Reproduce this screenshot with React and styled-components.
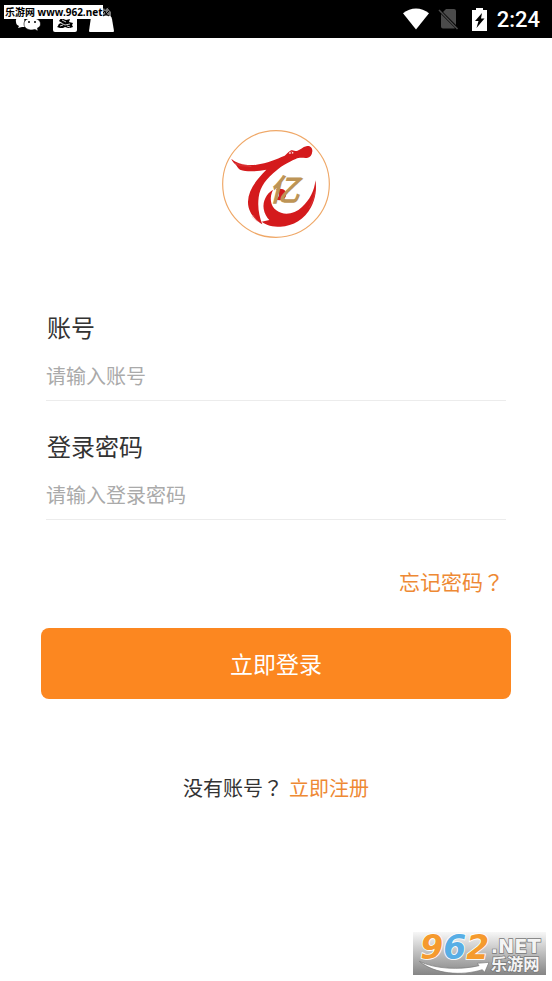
import React, { useState } from "react";
import styled, { createGlobalStyle, ThemeProvider } from "styled-components";

const theme = {
  primary: "#fc8720",
  link: "#ee8934",
  text: "#333333",
  placeholder: "#aaaaaa",
  line: "#ececec",
  font: {
    family: `"Noto Sans CJK SC", "Noto Sans", sans-serif`,
    centered: `"Noto Sans CJK TC", "Noto Sans", sans-serif`,
    status: `Roboto, "Noto Sans", sans-serif`,
    size: { s: "20px", m: "21px", l: "23px", xl: "24px" },
  },
};

const GlobalStyle = createGlobalStyle`
  * {
    box-sizing: border-box;
  }
  body {
    margin: 0;
    background: #ffffff;
    color: ${theme.text};
    font-family: ${theme.font.family};
  }
`;

const StyledPage = styled.div`
  position: relative;
  display: flex;
  flex-direction: column;
  min-height: 100vh;
`;

const StyledStatusBar = styled.header`
  display: flex;
  align-items: center;
  justify-content: space-between;
  height: 38px;
  padding: 0 12px 0 15px;
  background: #000000;
`;

const StyledNotifications = styled.div`
  display: flex;
  align-items: flex-end;
  gap: 12px;
  height: 28px;
`;

const StyledSystem = styled.div`
  display: flex;
  align-items: center;
`;

const StyledIcon = styled.svg`
  display: block;
  flex: none;
  width: ${({ $width }) => $width}px;
  height: ${({ $height }) => $height}px;
  margin-right: ${({ $gap }) => $gap || 0}px;
`;

const StyledTime = styled.span`
  padding-top: 2px;
  font-family: ${({ theme }) => theme.font.status};
  font-size: 22px;
  font-weight: 500;
  line-height: 36px;
  color: #ffffff;
`;

const StyledSiteTag = styled.span`
  position: absolute;
  top: 5px;
  left: 4px;
  padding: 0 1px;
  background: #ffffff;
  color: #000000;
  font-family: "Noto Sans", "Noto Sans CJK SC", sans-serif;
  font-size: 10px;
  font-weight: 700;
  line-height: 14px;
  white-space: nowrap;
`;

const StyledMain = styled.main`
  display: flex;
  flex-direction: column;
  padding: 86px 41px 0;
`;

const StyledLogo = styled.svg`
  display: block;
  align-self: center;
  width: 120px;
  height: 120px;
`;

const StyledForm = styled.form`
  display: flex;
  flex-direction: column;
  margin-top: 66px;
`;

const StyledField = styled.div`
  display: flex;
  flex-direction: column;
  height: 91px;
  margin: 0 5px 28px;
  border-bottom: 1px solid ${({ theme }) => theme.line};
`;

const StyledLabel = styled.label`
  padding-left: 1px;
  font-size: ${({ theme }) => theme.font.size.xl};
  line-height: 34px;
`;

const StyledInput = styled.input`
  width: 100%;
  height: 30px;
  margin-top: 16px;
  padding: 0;
  border: 0;
  outline: 0;
  background: transparent;
  color: ${({ theme }) => theme.text};
  font-family: inherit;
  font-size: ${({ theme }) => theme.font.size.s};
  &::placeholder {
    color: ${({ theme }) => theme.placeholder};
    opacity: 1;
  }
`;

const StyledLink = styled.a`
  color: ${({ theme }) => theme.link};
  text-decoration: none;
`;

const StyledMark = styled.span`
  font-family: ${({ theme }) => theme.font.centered};
`;

const StyledForgot = styled(StyledLink)`
  align-self: flex-end;
  margin: 17px 7px 31px 0;
  font-size: ${({ theme }) => theme.font.size.m};
  line-height: 32px;
`;

const StyledButton = styled.button`
  width: 100%;
  height: 71px;
  padding: 0 0 2px;
  border: 0;
  border-radius: 8px;
  background: ${({ theme }) => theme.primary};
  color: #ffffff;
  font-family: inherit;
  font-size: ${({ theme }) => theme.font.size.l};
  cursor: pointer;
`;

const StyledRegister = styled.p`
  display: flex;
  justify-content: center;
  gap: 6px;
  margin: 74px 0 60px;
  font-size: ${({ theme }) => theme.font.size.s};
  line-height: 30px;
`;

const StyledWatermark = styled.svg`
  position: absolute;
  right: 6px;
  bottom: 6px;
  width: 133px;
  height: 43px;
  overflow: visible;
`;

const ChatIcon = () => (
  <StyledIcon $width={26} $height={18} viewBox="0 0 26 18" aria-hidden="true">
    <path fill="#fff" d="M9 1C4 1 0 3 1 7c0 2 1 3 3 4l-1 2 4-1h3z" />
    <path
      fill="#fff"
      stroke="#000"
      strokeWidth=".6"
      d="M17 3c-4 0-8 2-8 6s4 6 8 6l3-.5 3 1.500-.5-3c2-1 3-2 3-4 0-4-4-6-8.500-6z"
    />
    <circle cx="14" cy="7" r="1" />
    <circle cx="20" cy="7" r="1" />
  </StyledIcon>
);

const PictureIcon = () => (
  <StyledIcon $width={24} $height={24} viewBox="0 0 24 24" aria-hidden="true">
    <rect width="24" height="23" rx="2" fill="#fff" />
    <path d="M5 17c0-2 2-3 4-3l-3-2 2-3 5 2 4-1-1 3 4 1-1 2 1 2-3 1-2 0-3-1-2 1-3 0-3-1z" />
    <path d="M8 14l4 2 5-1M7 17l3-1M14 17l3 1M9 11l4 2" stroke="#fff" strokeWidth=".8" fill="none" />
  </StyledIcon>
);

const BagIcon = () => (
  <StyledIcon $width={25} $height={27} viewBox="0 0 25 27" aria-hidden="true">
    <path d="M2 11q1-2 3-2h14q3 0 4 4l2 12q0 1-1 1H1q-1 0-1-1z" fill="#fff" />
    <path d="M13 10V4l2-2 1 2 3-3 1 3 2 2v4z" fill="#777" />
    <path d="M14 7l2-2 1 3 3-3M18 1l2 2M14 10l3-2 3 2" stroke="#000" fill="none" />
  </StyledIcon>
);

const WifiIcon = () => (
  <StyledIcon $width={26} $height={22} $gap={9} viewBox="0 0 27 22" aria-hidden="true">
    <path d="M0 5C8-1.500 19-1.500 27 5L13.500 22z" fill="#fff" />
  </StyledIcon>
);

const NoSimIcon = () => (
  <StyledIcon $width={21} $height={22} $gap={13} viewBox="0 0 21 22" aria-hidden="true">
    <path
      d="M8 1h8q2 0 2 2v14L5 4zM3 6l14 14q-.5.500-1.500.500H5q-2 0-2-2z"
      fill="#4b4b4b"
    />
    <path d="M1 2l18.500 19" stroke="#4b4b4b" strokeWidth="1.500" />
  </StyledIcon>
);

const BatteryIcon = () => (
  <StyledIcon $width={15} $height={23} $gap={10} viewBox="0 0 15 23" aria-hidden="true">
    <path d="M4 0h7v2h4v21H0V2h4z" fill="#fff" />
    <path d="M10 5L3 13h3.500L4.500 20l8-9.500H9z" fill="#000" />
  </StyledIcon>
);

const Logo = () => (
  <StyledLogo viewBox="0 0 360 360" role="img" aria-label="亿">
    <circle cx="180" cy="180" r="160" fill="#fff" stroke="#efa868" strokeWidth="3.500" />
    <g fill="#d41a1c">
      <path d="M46 104C62 119 91 126 121 122C154 118 181 105 206 95C212 91 215 84 223 80C230 76 236 82 243 81C254 78 260 69 271 67C281 64 290 72 289 82C288 94 282 101 273 102C262 103 252 99 239 105C214 116 199 125 184 137C151 163 132 188 128 220C124 252 130 278 139 301C116 287 95 264 96 233C97 200 118 170 151 137C123 142 94 145 72 137C65 134 64 127 58 121C53 116 48 111 46 104Z" />
      <path d="M171 197C151 209 140 231 143 254C145 269 153 280 160 288L137 293C151 304 170 308 193 308C232 307 266 285 285 250C299 224 303 194 298 169C296 199 281 229 258 249C235 271 203 276 181 259C162 244 160 220 171 197Z" />
      <path d="M180 196C202 190 216 202 209 218C204 230 188 231 178 225C190 221 195 208 180 196Z" />
    </g>
    <path d="M218 88c4-6 12-6 15-1-5 3-10 4-15 1z" fill="#fff" />
    <circle cx="226" cy="87" r="3" fill="#d41a1c" />
    <path
      d="M57 119l15 6 34 2-31-7zM108 278l16 14-12-19zM279 251c11-17 16-32 18-48"
      fill="none"
      stroke="#e86b6a"
      strokeWidth="1"
    />
    <text
      x="159"
      y="231"
      fill="#bd9456"
      fontFamily="'Noto Sans CJK SC', sans-serif"
      fontSize="92"
      fontWeight="700"
      fontStyle="italic"
    >
      亿
    </text>
  </StyledLogo>
);

const Watermark = () => (
  <StyledWatermark viewBox="39 36 399 129" role="img" aria-label="962.NET 乐游网">
    <defs>
      <linearGradient id="shade" x1="0" y1="0" x2="0" y2="1">
        <stop offset="0" stopColor="#f7f7f7" />
        <stop offset="0.5" stopColor="#bdbdbd" />
        <stop offset="1" stopColor="#858585" />
      </linearGradient>
    </defs>
    <rect x="39" y="36" width="399" height="129" fill="url(#shade)" />
    <g
      fontFamily="'DejaVu Sans', sans-serif"
      fontSize="99"
      fontWeight="700"
      fontStyle="italic"
      stroke="#fff"
      strokeWidth="5"
      paintOrder="stroke"
    >
      <text x="61" y="117">
        <tspan fill="#f59a2e">9</tspan>
        <tspan fill="#58aee5">6</tspan>
        <tspan fill="#f59a2e">2</tspan>
      </text>
    </g>
    <path
      d="M58 124C105 147 179 151 237 137L232 130L267 127L254 157L247 149C184 169 104 162 58 124Z"
      fill="#fff"
      stroke="#777"
      strokeWidth="2"
    />
    <g fill="#f4f4f4" stroke="#777" strokeWidth="4" paintOrder="stroke" fontWeight="700">
      <text x="272" y="100" fontFamily="'DejaVu Sans', sans-serif" fontSize="58">
        .NET
      </text>
      <text x="272" y="150" fontFamily="'Noto Sans CJK SC', sans-serif" fontSize="49">
        乐游网
      </text>
    </g>
  </StyledWatermark>
);

const Field = ({ id, label, type = "text", placeholder, value, onChange }) => (
  <StyledField>
    <StyledLabel htmlFor={id}>{label}</StyledLabel>
    <StyledInput
      id={id}
      type={type}
      placeholder={placeholder}
      value={value}
      onChange={(e) => onChange(e.target.value)}
    />
  </StyledField>
);

const App = () => {
  const [account, setAccount] = useState("");
  const [password, setPassword] = useState("");

  return (
    <ThemeProvider theme={theme}>
      <GlobalStyle />
      <StyledPage>
        <StyledStatusBar>
          <StyledNotifications>
            <ChatIcon />
            <PictureIcon />
            <BagIcon />
          </StyledNotifications>
          <StyledSystem>
            <WifiIcon />
            <NoSimIcon />
            <BatteryIcon />
            <StyledTime>2:24</StyledTime>
          </StyledSystem>
        </StyledStatusBar>
        <StyledSiteTag>乐游网 www.962.net</StyledSiteTag>
        <StyledMain>
          <Logo />
          <StyledForm onSubmit={(e) => e.preventDefault()}>
            <Field
              id="account"
              label="账号"
              placeholder="请输入账号"
              value={account}
              onChange={setAccount}
            />
            <Field
              id="password"
              label="登录密码"
              type="password"
              placeholder="请输入登录密码"
              value={password}
              onChange={setPassword}
            />
            <StyledForgot href="#forgot">
              忘记密码<StyledMark>？</StyledMark>
            </StyledForgot>
            <StyledButton type="submit">立即登录</StyledButton>
          </StyledForm>
          <StyledRegister>
            <span>
              没有账号<StyledMark>？</StyledMark>
            </span>
            <StyledLink href="#register">立即注册</StyledLink>
          </StyledRegister>
        </StyledMain>
        <Watermark />
      </StyledPage>
    </ThemeProvider>
  );
};

export default App;
